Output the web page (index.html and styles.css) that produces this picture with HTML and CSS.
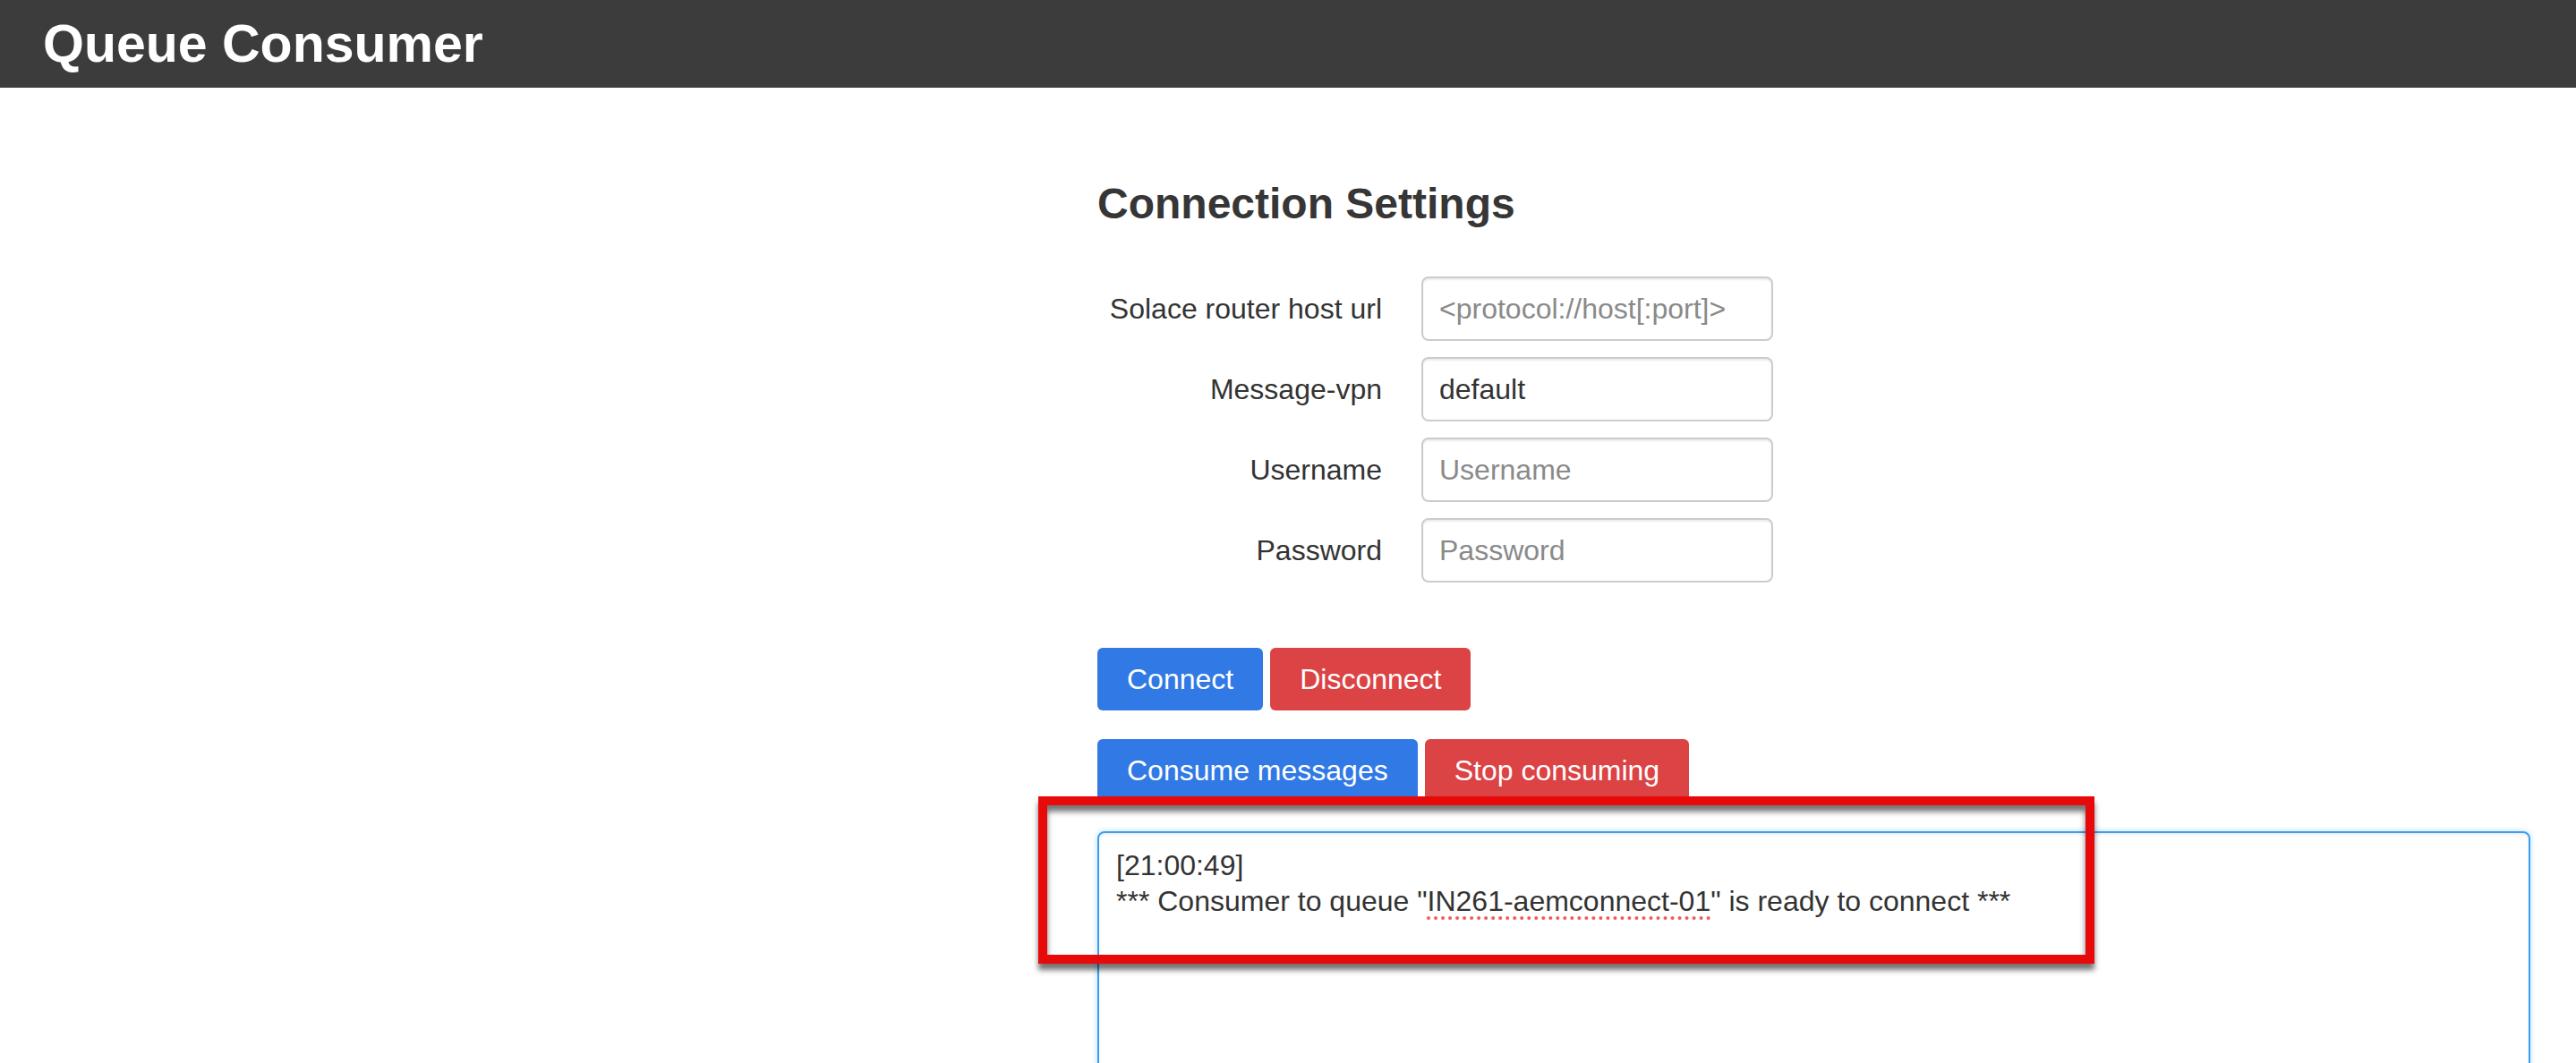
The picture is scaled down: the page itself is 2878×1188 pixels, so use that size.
FILE: index.html
```html
<!DOCTYPE html>
<html>
<head>
<meta charset="utf-8">
<title>Queue Consumer</title>
<link rel="stylesheet" href="styles.css">
</head>
<body>
<header class="topbar">
  <h1 class="title">Queue Consumer</h1>
</header>
<main class="main">
  <h3 class="heading">Connection Settings</h3>
  <form class="form">
    <div class="row">
      <label class="label">Solace router host url</label>
      <input class="input" type="text" placeholder="&lt;protocol://host[:port]&gt;">
    </div>
    <div class="row">
      <label class="label">Message-vpn</label>
      <input class="input" type="text" value="default">
    </div>
    <div class="row">
      <label class="label">Username</label>
      <input class="input" type="text" placeholder="Username">
    </div>
    <div class="row">
      <label class="label">Password</label>
      <input class="input" type="password" placeholder="Password">
    </div>
  </form>
  <div class="buttons first">
    <button class="btn blue" type="button">Connect</button>
    <button class="btn red" type="button">Disconnect</button>
  </div>
  <div class="buttons second">
    <button class="btn blue" type="button">Consume messages</button>
    <button class="btn red" type="button">Stop consuming</button>
  </div>
  <div class="log">[21:00:49]<br>*** Consumer to queue "<span class="misspelled">IN261-aemconnect-01</span>" is ready to connect ***</div>
</main>
<div class="annotation"></div>
</body>
</html>
```
FILE: styles.css
```css
html, body {
  margin: 0;
  padding: 0;
  background: #ffffff;
}
body {
  font-family: "Liberation Sans", Arial, Helvetica, sans-serif;
  font-size: 32px;
  color: #333333;
  position: relative;
  height: 1188px;
  overflow: hidden;
}
.topbar {
  height: 98px;
  background: #3c3c3c;
  display: flex;
  align-items: center;
  padding-left: 48px;
}
.title {
  margin: 0;
  font-size: 59px;
  font-weight: bold;
  color: #ffffff;
  line-height: normal;
}
.main {
  margin-left: 1226px;
  margin-right: 51px;
  padding-top: 102px;
}
.heading {
  margin: 0;
  font-size: 48px;
  line-height: 56px;
  font-weight: bold;
  color: #363636;
}
.form {
  margin-top: 53px;
  display: flex;
  flex-direction: column;
  gap: 18px;
}
.row {
  display: flex;
  align-items: center;
  height: 72px;
}
.label {
  width: 318px;
  text-align: right;
  padding-right: 44px;
  font-size: 32px;
  color: #333333;
}
.input {
  box-sizing: border-box;
  width: 393px;
  height: 72px;
  border: 2px solid #cccccc;
  border-radius: 8px;
  padding: 0 18px;
  font-family: "Liberation Sans", Arial, Helvetica, sans-serif;
  font-size: 32px;
  color: #333333;
  background: #ffffff;
  box-shadow: inset 0 2px 2px rgba(0, 0, 0, 0.075);
  outline: none;
}
.input::placeholder {
  color: #8a8a8a;
}
.buttons {
  display: flex;
  gap: 8px;
}
.buttons.first {
  margin-top: 73px;
}
.buttons.second {
  margin-top: 32px;
}
.btn {
  height: 70px;
  padding: 0 33px;
  border: none;
  border-radius: 6px;
  font-family: "Liberation Sans", Arial, Helvetica, sans-serif;
  font-size: 32px;
  color: #ffffff;
  cursor: pointer;
}
.btn.blue {
  background: #3179e4;
}
.btn.red {
  background: #db4345;
}
.log {
  margin-top: 33px;
  box-sizing: border-box;
  height: 420px;
  border: 2px solid #3a9ff0;
  border-radius: 8px;
  padding: 16px 19px;
  font-size: 32px;
  line-height: 40px;
  color: #333333;
  box-shadow: inset 0 2px 3px rgba(0, 0, 0, 0.08), 0 0 6px rgba(58, 159, 240, 0.35);
}
.misspelled {
  text-decoration: underline dotted #f25b5b;
  text-decoration-thickness: 4px;
  text-underline-offset: 6px;
}
.annotation {
  position: absolute;
  left: 1160px;
  top: 890px;
  width: 1180px;
  height: 187px;
  box-sizing: border-box;
  border: 10px solid #e8090b;
  box-shadow: 0 7px 6px rgba(0, 0, 0, 0.55), inset 0 7px 6px rgba(0, 0, 0, 0.55);
  pointer-events: none;
}
```
